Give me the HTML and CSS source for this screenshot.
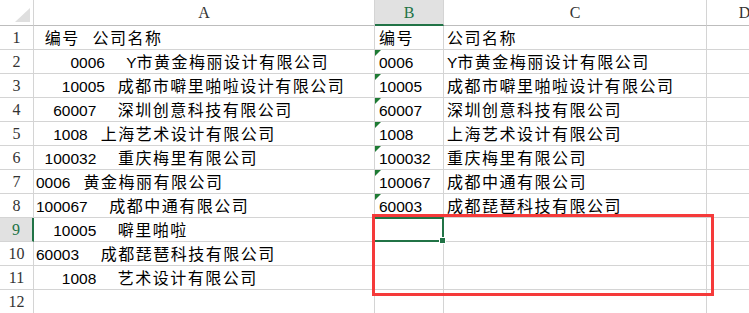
FILE: index.html
```html
<!DOCTYPE html>
<html lang="zh-CN">
<head>
  <meta charset="UTF-8">
  <title>Sheet1</title>
  <link rel="stylesheet" href="styles.css">
</head>
<body>
  <div class="wrap">
    <div class="sheet">
      <!-- column headers -->
      <div class="corner">
        <svg width="33" height="25" viewBox="0 0 33 25"><polygon points="15,22 30,22 30,8" fill="#dfdfdf"/></svg>
      </div>
      <div class="col-head">A</div>
      <div class="col-head sel">B</div>
      <div class="col-head">C</div>
      <div class="col-head">D</div>

      <div class="row-head">1</div>
      <div class="cell a">  <span class="zh">编号</span>   <span class="zh">公司名称</span></div>
      <div class="cell b"><span class="zh">编号</span></div>
      <div class="cell c"><span class="zh">公司名称</span></div>
      <div class="cell"></div>

      <div class="row-head">2</div>
      <div class="cell a">        0006     Y<span class="zh">市黄金梅丽设计有限公司</span></div>
      <div class="cell b txt">0006</div>
      <div class="cell c">Y<span class="zh">市黄金梅丽设计有限公司</span></div>
      <div class="cell"></div>

      <div class="row-head">3</div>
      <div class="cell a">      10005   <span class="zh">成都市噼里啪啦设计有限公司</span></div>
      <div class="cell b txt">10005</div>
      <div class="cell c"><span class="zh">成都市噼里啪啦设计有限公司</span></div>
      <div class="cell"></div>

      <div class="row-head">4</div>
      <div class="cell a">    60007     <span class="zh">深圳创意科技有限公司</span></div>
      <div class="cell b txt">60007</div>
      <div class="cell c"><span class="zh">深圳创意科技有限公司</span></div>
      <div class="cell"></div>

      <div class="row-head">5</div>
      <div class="cell a">    1008   <span class="zh">上海艺术设计有限公司</span></div>
      <div class="cell b txt">1008</div>
      <div class="cell c"><span class="zh">上海艺术设计有限公司</span></div>
      <div class="cell"></div>

      <div class="row-head">6</div>
      <div class="cell a">  100032     <span class="zh">重庆梅里有限公司</span></div>
      <div class="cell b txt">100032</div>
      <div class="cell c"><span class="zh">重庆梅里有限公司</span></div>
      <div class="cell"></div>

      <div class="row-head">7</div>
      <div class="cell a">0006   <span class="zh">黄金梅丽有限公司</span></div>
      <div class="cell b txt">100067</div>
      <div class="cell c"><span class="zh">成都中通有限公司</span></div>
      <div class="cell"></div>

      <div class="row-head">8</div>
      <div class="cell a">100067     <span class="zh">成都中通有限公司</span></div>
      <div class="cell b txt">60003</div>
      <div class="cell c"><span class="zh">成都琵琶科技有限公司</span></div>
      <div class="cell"></div>

      <div class="row-head sel">9</div>
      <div class="cell a">    10005     <span class="zh">噼里啪啦</span></div>
      <div class="cell b active"></div>
      <div class="cell c"></div>
      <div class="cell"></div>

      <div class="row-head">10</div>
      <div class="cell a">60003     <span class="zh">成都琵琶科技有限公司</span></div>
      <div class="cell b"></div>
      <div class="cell c"></div>
      <div class="cell"></div>

      <div class="row-head">11</div>
      <div class="cell a">      1008     <span class="zh">艺术设计有限公司</span></div>
      <div class="cell b"></div>
      <div class="cell c"></div>
      <div class="cell"></div>

      <div class="row-head">12</div>
      <div class="cell a"></div>
      <div class="cell b"></div>
      <div class="cell c"></div>
      <div class="cell"></div>
    </div>

    <div class="mark"></div>
  </div>
</body>
</html>
```

FILE: styles.css
```css
body {
  margin: 0;
  background-color: #ffffff;
  overflow: hidden;
}
.wrap {
  position: relative;
  width: 749px;
  height: 313px;
  overflow: hidden;
}
.sheet {
  display: grid;
  grid-template-columns: 34px 341px 69px 263px 76px;
  grid-template-rows: 26px repeat(12, 24px);
  width: 783px;
  font-family: "Liberation Sans", "Noto Sans CJK SC", sans-serif;
  font-size: 15.5px;
  color: #000;
}
.corner {
  border-right: 1px solid #d4d4d4;
  border-bottom: 1px solid #bdbdbd;
  box-sizing: border-box;
}
.corner svg {
  display: block;
}
.col-head {
  font-family: "Liberation Serif", serif;
  font-size: 16px;
  color: #333;
  text-align: center;
  line-height: 25px;
  border-right: 1px solid #d4d4d4;
  border-bottom: 1px solid #bdbdbd;
  box-sizing: border-box;
}
.col-head.sel {
  background-color: #e1e1e1;
  color: #217346;
  border-bottom: 2px solid #217346;
}
.row-head {
  font-family: "Liberation Serif", serif;
  font-size: 16px;
  color: #333;
  text-align: center;
  line-height: 23px;
  border-right: 1px solid #d4d4d4;
  border-bottom: 1px solid #d4d4d4;
  box-sizing: border-box;
}
.row-head.sel {
  background-color: #e1e1e1;
  color: #217346;
  border-right: 2px solid #217346;
}
.cell {
  position: relative;
  white-space: pre;
  overflow: hidden;
  line-height: 21px;
  padding: 2px 0 0 3px;
  border-right: 1px solid #d4d4d4;
  border-bottom: 1px solid #d4d4d4;
  box-sizing: border-box;
}
.cell.a {
  padding-left: 2px;
}
.cell.b {
  padding-left: 4px;
}
.zh {
  font-size: 16px;
  letter-spacing: 1.5px;
}
/* number stored as text */
.cell.txt::before {
  content: "";
  position: absolute;
  left: 0;
  top: 0;
  border-top: 6px solid #1e7b34;
  border-right: 6px solid transparent;
}
.cell.active {
  overflow: visible;
}
.cell.active::after {
  content: "";
  position: absolute;
  left: -2px;
  top: -1px;
  right: -1px;
  bottom: -1px;
  border: 2px solid #217346;
}
.cell.active::before {
  content: "";
  position: absolute;
  right: -3px;
  bottom: -3px;
  width: 5px;
  height: 5px;
  background-color: #217346;
  border: 1px solid #fff;
  z-index: 1;
}
.mark {
  position: absolute;
  left: 372px;
  top: 214px;
  width: 342px;
  height: 82px;
  border: 3px solid #f53a3a;
  box-sizing: border-box;
}
```
